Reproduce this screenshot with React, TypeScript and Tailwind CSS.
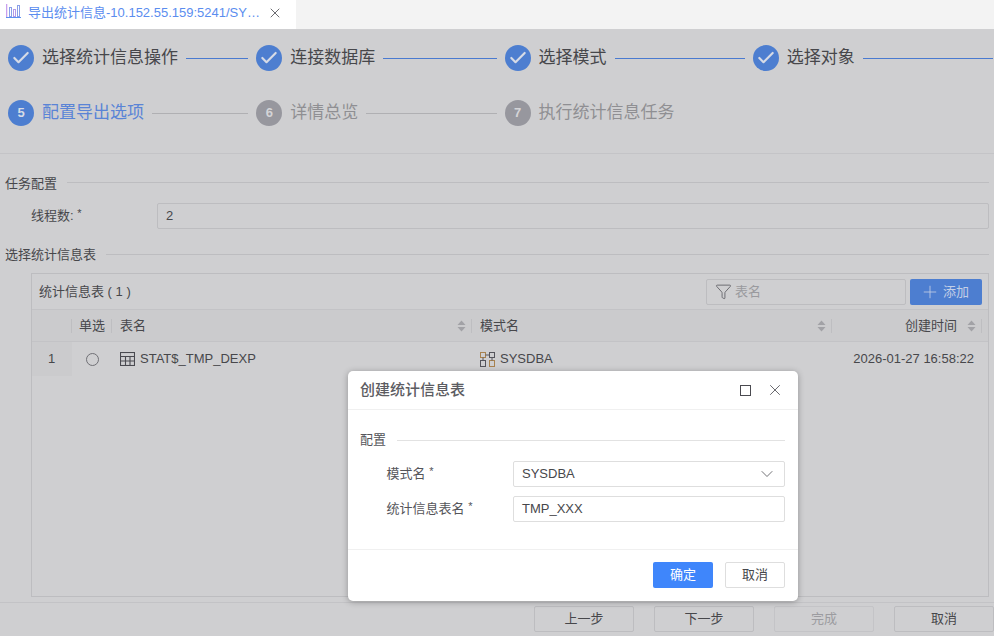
import React from 'react';
import { Check, ChevronDown, Funnel, Plus, X } from 'lucide-react';

const doneSteps = ['选择统计信息操作', '连接数据库', '选择模式', '选择对象'];
const font = { fontFamily: '"Liberation Sans", "Noto Sans CJK SC", sans-serif' };

const BarsIcon = () => (
  <svg width="15" height="14" viewBox="0 0 15 14" fill="none" strokeWidth="1" className="mb-1">
    <path d="M0.5 0V13" stroke="#c9a0ee" strokeWidth="1.6" />
    <path d="M0 13.5H15" stroke="#5b8ff0" />
    <rect x="3.5" y="3.5" width="2" height="9" stroke="#8a9fe8" />
    <rect x="7.5" y="5.5" width="2" height="7" stroke="#b59ae8" />
    <rect x="11.5" y="1.5" width="2" height="11" stroke="#8a9fe8" />
  </svg>
);

const TableIcon = () => (
  <svg width="15" height="14" viewBox="0 0 15 14" fill="none" stroke="#4a4a50" strokeWidth="1.1">
    <rect x="0.5" y="0.5" width="14" height="13" />
    <path d="M0.5 4.5H14.5M0.5 9H14.5M5.5 4.5V13.5M10 4.5V13.5" />
  </svg>
);

const SchemaIcon = () => (
  <svg width="15" height="15" viewBox="0 0 15 15" fill="none" strokeWidth="1" stroke="#55555c">
    <rect x="0.5" y="0.5" width="5" height="5" stroke="#a8824f" />
    <rect x="9.5" y="0.5" width="5" height="5" />
    <rect x="0.5" y="8.5" width="5" height="6" />
    <rect x="9.5" y="8.5" width="5" height="6" stroke="#a8824f" />
    <path d="M5.5 3H9.5M3 5.5V8.5M12 5.5V8.5" />
  </svg>
);

const SortIcon = () => (
  <svg width="9" height="12" viewBox="0 0 9 12" fill="#a2a2a6">
    <path d="M4.5 0.5L8.5 5H0.5Z" />
    <path d="M4.5 11.5L0.5 7H8.5Z" />
  </svg>
);

const SectionTitle = ({ title, className, lineClass }: { title: string; className?: string; lineClass: string }) => (
  <div className={`flex items-start gap-[10px] ${className ?? ''}`}>
    <span className="text-[13px] leading-[18px]">{title}</span>
    <div className={`h-px flex-1 bg-[#bdbdc0] ${lineClass}`} />
  </div>
);

const StepLine = ({ color }: { color: string }) => <div className={`h-px flex-1 ml-2 ${color}`} />;

const HeaderCell = ({ label, right, sort }: { label: string; right?: boolean; sort?: boolean }) => (
  <div className={`flex h-[14px] items-center border-r border-[#bebec1] pr-[5px] ${sort ? 'pl-2' : 'pl-[7px]'} ${right ? 'justify-end' : ''}`}>
    <span className={right ? '' : 'flex-1'}>{label}</span>
    {right && <span className="w-[10px]" />}
    {sort && <SortIcon />}
  </div>
);

export default function App() {
  return (
    <div className="relative flex h-[636px] w-[994px] flex-col overflow-hidden bg-[#cfcfd1] text-[13px] text-[#47474b]" style={font}>
      {/* Tab bar */}
      <div className="flex h-[29px] shrink-0 bg-[#f3f3f3]">
        <div className="flex w-[296px] items-center bg-white pb-[3px] pl-[6px]">
          <BarsIcon />
          <span className="ml-[7px] w-[232px] whitespace-nowrap text-[13px] text-[#5b8def]">导出统计信息-10.152.55.159:5241/SY…</span>
          <X size={16} strokeWidth={1.3} className="ml-[7px] text-[#55555a]" />
        </div>
      </div>

      {/* Steps */}
      <div className="grid h-[125px] shrink-0 grid-cols-4 content-start gap-x-2 gap-y-[29px] border-b border-[#c4c4c7] pl-2 pr-px pt-4">
        {doneSteps.map((step) => (
          <div key={step} className="flex h-[26px] items-center">
            <div className="flex h-[26px] w-[26px] shrink-0 items-center justify-center rounded-full bg-[#4d7ed0]">
              <Check size={20} strokeWidth={2.6} className="text-[#d6dbe6]" />
            </div>
            <span className="ml-2 text-[17px] text-[#47474b]">{step}</span>
            <StepLine color="bg-[#4a7ad0]" />
          </div>
        ))}
        <div className="flex h-[26px] items-center">
          <div className="flex h-[26px] w-[26px] shrink-0 items-center justify-center rounded-full bg-[#4d7ed0] text-[13px] font-bold text-[#d6dbe6]">5</div>
          <span className="ml-2 text-[17px] text-[#5a84d6]">配置导出选项</span>
          <StepLine color="bg-[#b0b0b3]" />
        </div>
        <div className="flex h-[26px] items-center">
          <div className="flex h-[26px] w-[26px] shrink-0 items-center justify-center rounded-full bg-[#97979e] text-[13px] font-bold text-[#d4d4d7]">6</div>
          <span className="ml-2 text-[17px] text-[#8f8f93]">详情总览</span>
          <StepLine color="bg-[#b0b0b3]" />
        </div>
        <div className="flex h-[26px] items-center">
          <div className="flex h-[26px] w-[26px] shrink-0 items-center justify-center rounded-full bg-[#97979e] text-[13px] font-bold text-[#d4d4d7]">7</div>
          <span className="ml-2 text-[17px] text-[#8f8f93]">执行统计信息任务</span>
        </div>
      </div>

      {/* Content */}
      <div className="flex min-h-0 flex-1 flex-col px-[5px] pt-[21px]">
        <SectionTitle title="任务配置" lineClass="mt-[7px]" />
        <div className="mt-[10px] flex h-[26px] items-center">
          <span className="w-[152px] pl-[26px] text-[13px]">
            线程数: <span className="relative -top-[3px] text-[11px]">*</span>
          </span>
          <div className="flex h-[26px] flex-1 items-center rounded-[2px] border border-[#bdbdc0] px-2">2</div>
        </div>
        <SectionTitle title="选择统计信息表" className="mt-[17px]" lineClass="mt-[8px]" />

        <div className="ml-[26px] mt-[9px] flex min-h-0 flex-1 flex-col border border-[#bdbdc0]">
          <div className="flex h-[36px] shrink-0 items-center border-b border-[#c3c3c6] pl-[7px] pr-[5px]">
            <span className="flex-1">统计信息表 ( 1 )</span>
            <div className="flex h-[26px] w-[200px] items-center rounded-[2px] border border-[#bdbdc0] pl-2 text-[#9a9a9e]">
              <Funnel size={17} strokeWidth={1.2} className="text-[#5c5c62]" />
              <span className="ml-[3px]">表名</span>
            </div>
            <button className="ml-1 mr-px flex h-[26px] w-[72px] items-center rounded-[2px] bg-[#4d7ed0] pl-[10px] text-[#c3cfe6]">
              <Plus size={20} strokeWidth={1} />
              <span className="ml-[3px]">添加</span>
            </button>
          </div>

          <div className="grid h-[32px] shrink-0 grid-cols-[40px_40px_360px_360px_150px] items-center border-b border-[#c3c3c6] bg-[#cbcbcd] pr-[5px]">
            <HeaderCell label="" />
            <HeaderCell label="单选" />
            <HeaderCell label="表名" sort />
            <HeaderCell label="模式名" sort />
            <HeaderCell label="创建时间" right sort />
          </div>

          <div className="grid h-[34px] shrink-0 grid-cols-[40px_40px_360px_1fr] items-center">
            <div className="flex h-full items-center justify-center bg-[#cbcbcd] pr-px">1</div>
            <div className="flex justify-center">
              <span className="h-[13px] w-[13px] rounded-full border border-[#707075]" />
            </div>
            <div className="flex items-center pl-2">
              <TableIcon />
              <span className="ml-[5px]">STAT$_TMP_DEXP</span>
            </div>
            <div className="flex items-center justify-between pl-2 pr-[14px]">
              <span className="flex items-center">
                <SchemaIcon />
                <span className="ml-[5px]">SYSDBA</span>
              </span>
              <span>2026-01-27 16:58:22</span>
            </div>
          </div>
        </div>

        <div className="mx-[-5px] mt-[5px] flex h-[34px] shrink-0 items-start justify-end gap-5 border-t border-[#c3c3c6] pt-[3px]">
          <button className="h-[26px] w-[100px] rounded-[2px] border border-[#bdbdc0]">上一步</button>
          <button className="h-[26px] w-[100px] rounded-[2px] border border-[#bdbdc0]">下一步</button>
          <button className="h-[26px] w-[100px] rounded-[2px] border border-[#c4c4c7] text-[#9c9ca0]">完成</button>
          <button className="h-[26px] w-[100px] rounded-[2px] border border-[#bdbdc0]">取消</button>
        </div>
      </div>

      {/* Dialog */}
      <div className="absolute left-[348px] top-[371px] flex h-[230px] w-[450px] flex-col rounded-[5px] bg-white text-[#55555a] shadow-[0_1px_6px_rgba(0,0,0,0.3)]">
        <div className="flex h-[39px] shrink-0 items-center border-b border-[#f0f0f0] pl-3 pr-[14px]">
          <span className="flex-1 text-[15px] font-medium text-[#5c5c62]">创建统计信息表</span>
          <div className="h-[11px] w-[11px] border border-[#4a4a50]" />
          <X size={18} strokeWidth={1.1} className="ml-[15px] text-[#4a4a50]" />
        </div>
        <div className="flex-1 pl-3 pr-[13px] pt-[21px]">
          <div className="flex items-center gap-[11px]">
            <span className="leading-[18px]">配置</span>
            <div className="h-px flex-1 bg-[#e2e2e2]" />
          </div>
          <div className="mt-[12px] flex h-[26px] items-center">
            <span className="w-[153px] pl-[26.5px]">
              模式名 <span className="relative -top-[3px] text-[11px]">*</span>
            </span>
            <div className="flex h-[26px] flex-1 items-center justify-between rounded-[2px] border border-[#dedede] pl-2 pr-[7px] text-[#47474b]">
              SYSDBA
              <ChevronDown size={20} strokeWidth={1} className="text-[#55555a]" />
            </div>
          </div>
          <div className="mt-[9px] flex h-[26px] items-center">
            <span className="w-[153px] pl-[26.5px]">
              统计信息表名 <span className="relative -top-[3px] text-[11px]">*</span>
            </span>
            <div className="flex h-[26px] flex-1 items-center rounded-[2px] border border-[#dedede] pl-2 text-[#47474b]">TMP_XXX</div>
          </div>
        </div>
        <div className="flex h-[52px] shrink-0 items-start justify-end gap-3 border-t border-[#f0f0f0] pr-[13px] pt-3">
          <button className="h-[26px] w-[60px] rounded-[2px] bg-[#3f86fb] text-white">确定</button>
          <button className="h-[26px] w-[60px] rounded-[2px] border border-[#dedede] text-[#47474b]">取消</button>
        </div>
      </div>
    </div>
  );
}
